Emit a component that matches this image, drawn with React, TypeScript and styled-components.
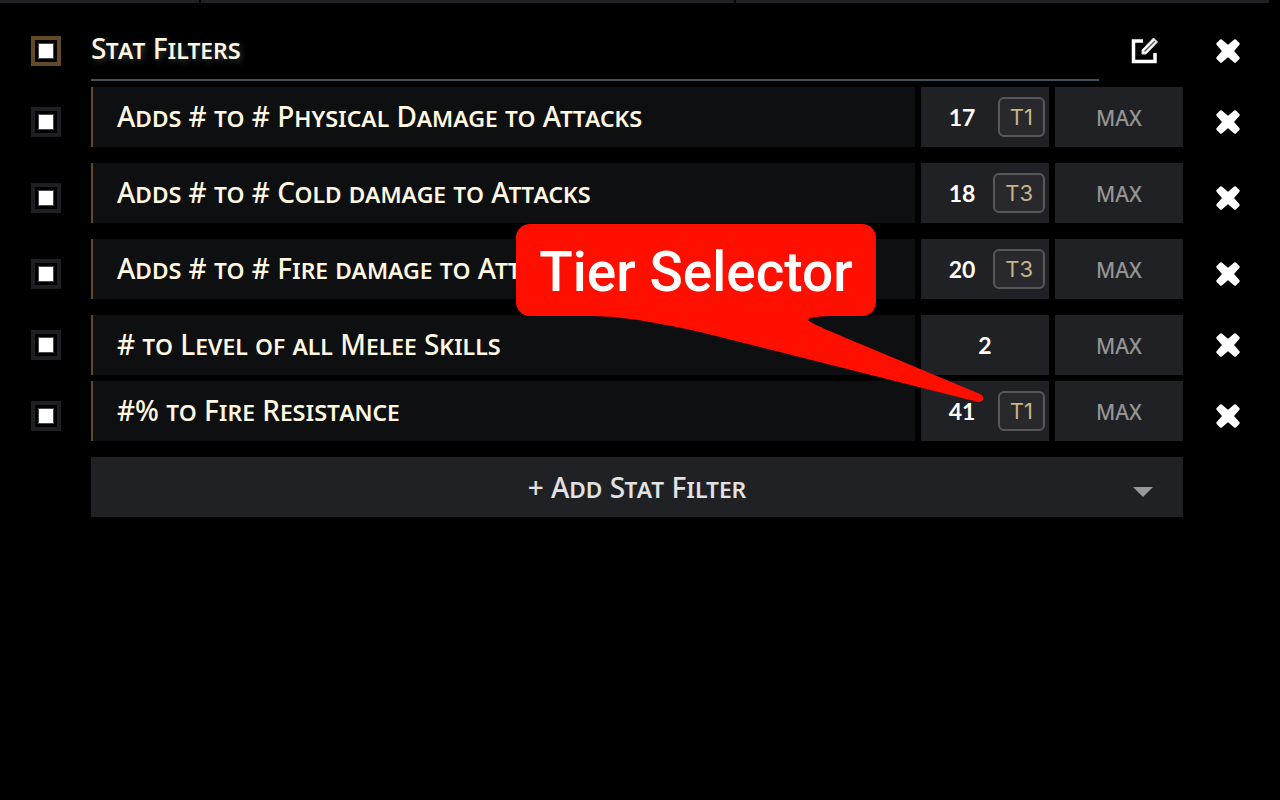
import React, { useState } from "react";
import styled, { createGlobalStyle, css } from "styled-components";

const GlobalStyle = createGlobalStyle`
  *, *::before, *::after { box-sizing: border-box; }
  body {
    margin: 0;
    background: #000;
    color: #fff8e1;
    font-family: Lato, "Liberation Sans", sans-serif;
  }
  button, input { font-family: inherit; margin: 0; }
`;

const smallCaps = css`
  font-family: "Noto Sans", "Open Sans", sans-serif;
  font-size: 28px;
  font-weight: 500;
  font-variant: small-caps;
`;

const Page = styled.div`
  min-height: 100vh;
  overflow-x: hidden;
`;

const TopStrip = styled.div`
  display: grid;
  grid-template-columns: 199fr 533fr 533fr;
  column-gap: 2px;
  padding-right: 11px;
`;

const StripCell = styled.div`
  height: 3px;
  background: #202125;
`;

const Panel = styled.section`
  display: flex;
  flex-direction: column;
  gap: 6px;
  padding: 18px 7px 0 1px;
`;

const Row = styled.div<{ $spaced?: boolean }>`
  display: grid;
  grid-template-columns: 90px 1fr 90px;
  align-items: center;
  justify-items: center;
  min-height: ${(p) => (p.$spaced ? 70 : 60)}px;
`;

const Body = styled.div`
  justify-self: stretch;
  align-self: start;
  display: flex;
  gap: 6px;
  height: 60px;
`;

const Title = styled.h2`
  ${smallCaps}
  flex: 1;
  margin: 0;
  border-bottom: 2px solid #44505f;
  line-height: 54px;
  text-shadow: 2px 2px 6px #38424a;
`;

const StatName = styled.div`
  ${smallCaps}
  flex: 1;
  min-width: 0;
  padding-left: 24px;
  border-left: 2px solid #634928;
  background: #0e0f11;
  line-height: 58px;
  white-space: nowrap;
  overflow: hidden;
`;

const Check = styled.input<{ $group?: boolean }>`
  appearance: none;
  display: grid;
  place-items: center;
  width: 30px;
  height: 30px;
  border: 4px solid ${(p) => (p.$group ? "#634928" : "#1e1f23")};
  background: #000;
  cursor: pointer;
  &:checked::before {
    content: "";
    width: 14px;
    height: 14px;
    background: #fff;
    box-shadow: 0 0 0 1px #4a4a4a;
  }
`;

const IconButton = styled.button<{ $wide?: boolean }>`
  display: grid;
  place-items: center;
  width: ${(p) => (p.$wide ? 78 : 30)}px;
  height: ${(p) => (p.$wide ? 60 : 30)}px;
  padding: 0;
  border: 0;
  background: none;
  color: #fff;
  cursor: pointer;
`;

const Cell = styled.div`
  position: relative;
  width: 128px;
  height: 60px;
  background: #202125;
`;

const NumberInput = styled.input<{ $tiered?: boolean }>`
  width: 100%;
  height: 100%;
  padding: 0;
  border: 0;
  background: none;
  color: #fff;
  font-size: 23px;
  font-weight: 700;
  text-align: center;
  ${(p) =>
    p.$tiered &&
    css`
      padding-right: 46px;
    `}
  &::placeholder {
    color: #949494;
    font-family: "Noto Sans", sans-serif;
    font-size: 21px;
    font-weight: 500;
    opacity: 1;
  }
`;

const Tier = styled.button`
  position: absolute;
  top: 10px;
  right: 4px;
  height: 40px;
  padding: 0 10px;
  border: 2px solid #58585a;
  border-radius: 6px;
  background: #29282d;
  color: #c8b385;
  font-family: Inter, sans-serif;
  font-size: 22px;
  line-height: 36px;
  cursor: pointer;
`;

const AddButton = styled.button`
  ${smallCaps}
  justify-self: stretch;
  display: grid;
  grid-template-columns: 1fr auto 1fr;
  align-items: center;
  height: 60px;
  padding: 0 30px;
  border: 0;
  background: #202125;
  color: #e2e2e2;
  cursor: pointer;
`;

const AddLabel = styled.span`
  grid-column: 2;
`;

const Caret = styled.svg`
  justify-self: end;
`;

const Callout = styled.div`
  position: absolute;
  right: 173px;
  bottom: 125px;
  z-index: 2;
  width: 360px;
  height: 92px;
  border-radius: 14px;
  background: #ff0f00;
  color: #fff;
  font-family: Roboto, sans-serif;
  font-size: 55px;
  font-weight: 500;
  line-height: 96px;
  text-align: center;
  white-space: nowrap;
  pointer-events: none;
`;

const CalloutText = styled.span`
  position: relative;
`;

const Tail = styled.svg`
  position: absolute;
  left: 0;
  top: 0;
`;

const CrossIcon = () => (
  <svg width="28" height="28" viewBox="0 0 28 28" aria-hidden="true">
    <path
      d="M7 3.500 14 9.500 21 3.500 24.500 7 18.500 14 24.500 21 21 24.500 14 18.500 7 24.500 3.500 21 9.500 14 3.500 7Z"
      fill="currentColor"
      stroke="currentColor"
      strokeWidth="2.500"
      strokeLinejoin="round"
    />
  </svg>
);

const EditIcon = () => (
  <svg width="30" height="30" viewBox="0 0 30 30" fill="none" aria-hidden="true">
    <path d="M14 5H4.500V25.500H26V17" stroke="currentColor" strokeWidth="3.500" />
    <path
      d="M13 14 24.500 2 28.500 6 17 18H13Z"
      fill="currentColor"
      stroke="#ddd"
      strokeWidth="1"
      strokeLinejoin="round"
    />
    <path d="M15.500 15.500 26 5" stroke="#555" strokeWidth="1.500" />
  </svg>
);

type Stat = { name: string; min: string; tier?: string; note?: string };

const STATS: Stat[] = [
  { name: "Adds # to # Physical Damage to Attacks", min: "17", tier: "T1" },
  { name: "Adds # to # Cold damage to Attacks", min: "18", tier: "T3" },
  { name: "Adds # to # Fire damage to Attacks", min: "20", tier: "T3" },
  { name: "# to Level of all Melee Skills", min: "2" },
  { name: "#% to Fire Resistance", min: "41", tier: "T1", note: "Tier Selector" },
];

function StatRow({ stat }: { stat: Stat }) {
  const [min, setMin] = useState(stat.min);
  return (
    <Row $spaced={!!stat.tier}>
      <Check type="checkbox" defaultChecked aria-label={`Enable ${stat.name}`} />
      <Body>
        <StatName>{stat.name}</StatName>
        <Cell>
          <NumberInput
            $tiered={!!stat.tier}
            value={min}
            onChange={(e) => setMin(e.target.value)}
            aria-label={`Minimum for ${stat.name}`}
          />
          {stat.tier && <Tier type="button">{stat.tier}</Tier>}
          {stat.note && (
            <Callout role="note">
              <Tail width="472" height="182" viewBox="0 0 472 182" aria-hidden="true">
                <path
                  fill="#ff0f00"
                  d="M14 80V92H70C104 92 128 96 184 108L462 178C468 179 469 172 464 170L342 119C318 109 294 99 292 96C293 93 302 92 322 92H340V80Z"
                />
              </Tail>
              <CalloutText>{stat.note}</CalloutText>
            </Callout>
          )}
        </Cell>
        <Cell>
          <NumberInput placeholder="MAX" aria-label={`Maximum for ${stat.name}`} />
        </Cell>
      </Body>
      <IconButton type="button" aria-label={`Remove ${stat.name}`}>
        <CrossIcon />
      </IconButton>
    </Row>
  );
}

export default function App() {
  return (
    <Page>
      <GlobalStyle />
      <TopStrip>
        <StripCell />
        <StripCell />
        <StripCell />
      </TopStrip>
      <Panel>
        <Row>
          <Check type="checkbox" $group defaultChecked aria-label="Enable stat filters" />
          <Body>
            <Title>Stat Filters</Title>
            <IconButton type="button" $wide aria-label="Edit group">
              <EditIcon />
            </IconButton>
          </Body>
          <IconButton type="button" aria-label="Remove group">
            <CrossIcon />
          </IconButton>
        </Row>
        {STATS.map((s) => (
          <StatRow key={s.name} stat={s} />
        ))}
        <Row>
          <span />
          <AddButton type="button">
            <AddLabel>+ Add Stat Filter</AddLabel>
            <Caret width="20" height="20" viewBox="0 0 20 20" aria-hidden="true">
              <path d="M0 10H20L10 20Z" fill="#999" />
            </Caret>
          </AddButton>
        </Row>
      </Panel>
    </Page>
  );
}
